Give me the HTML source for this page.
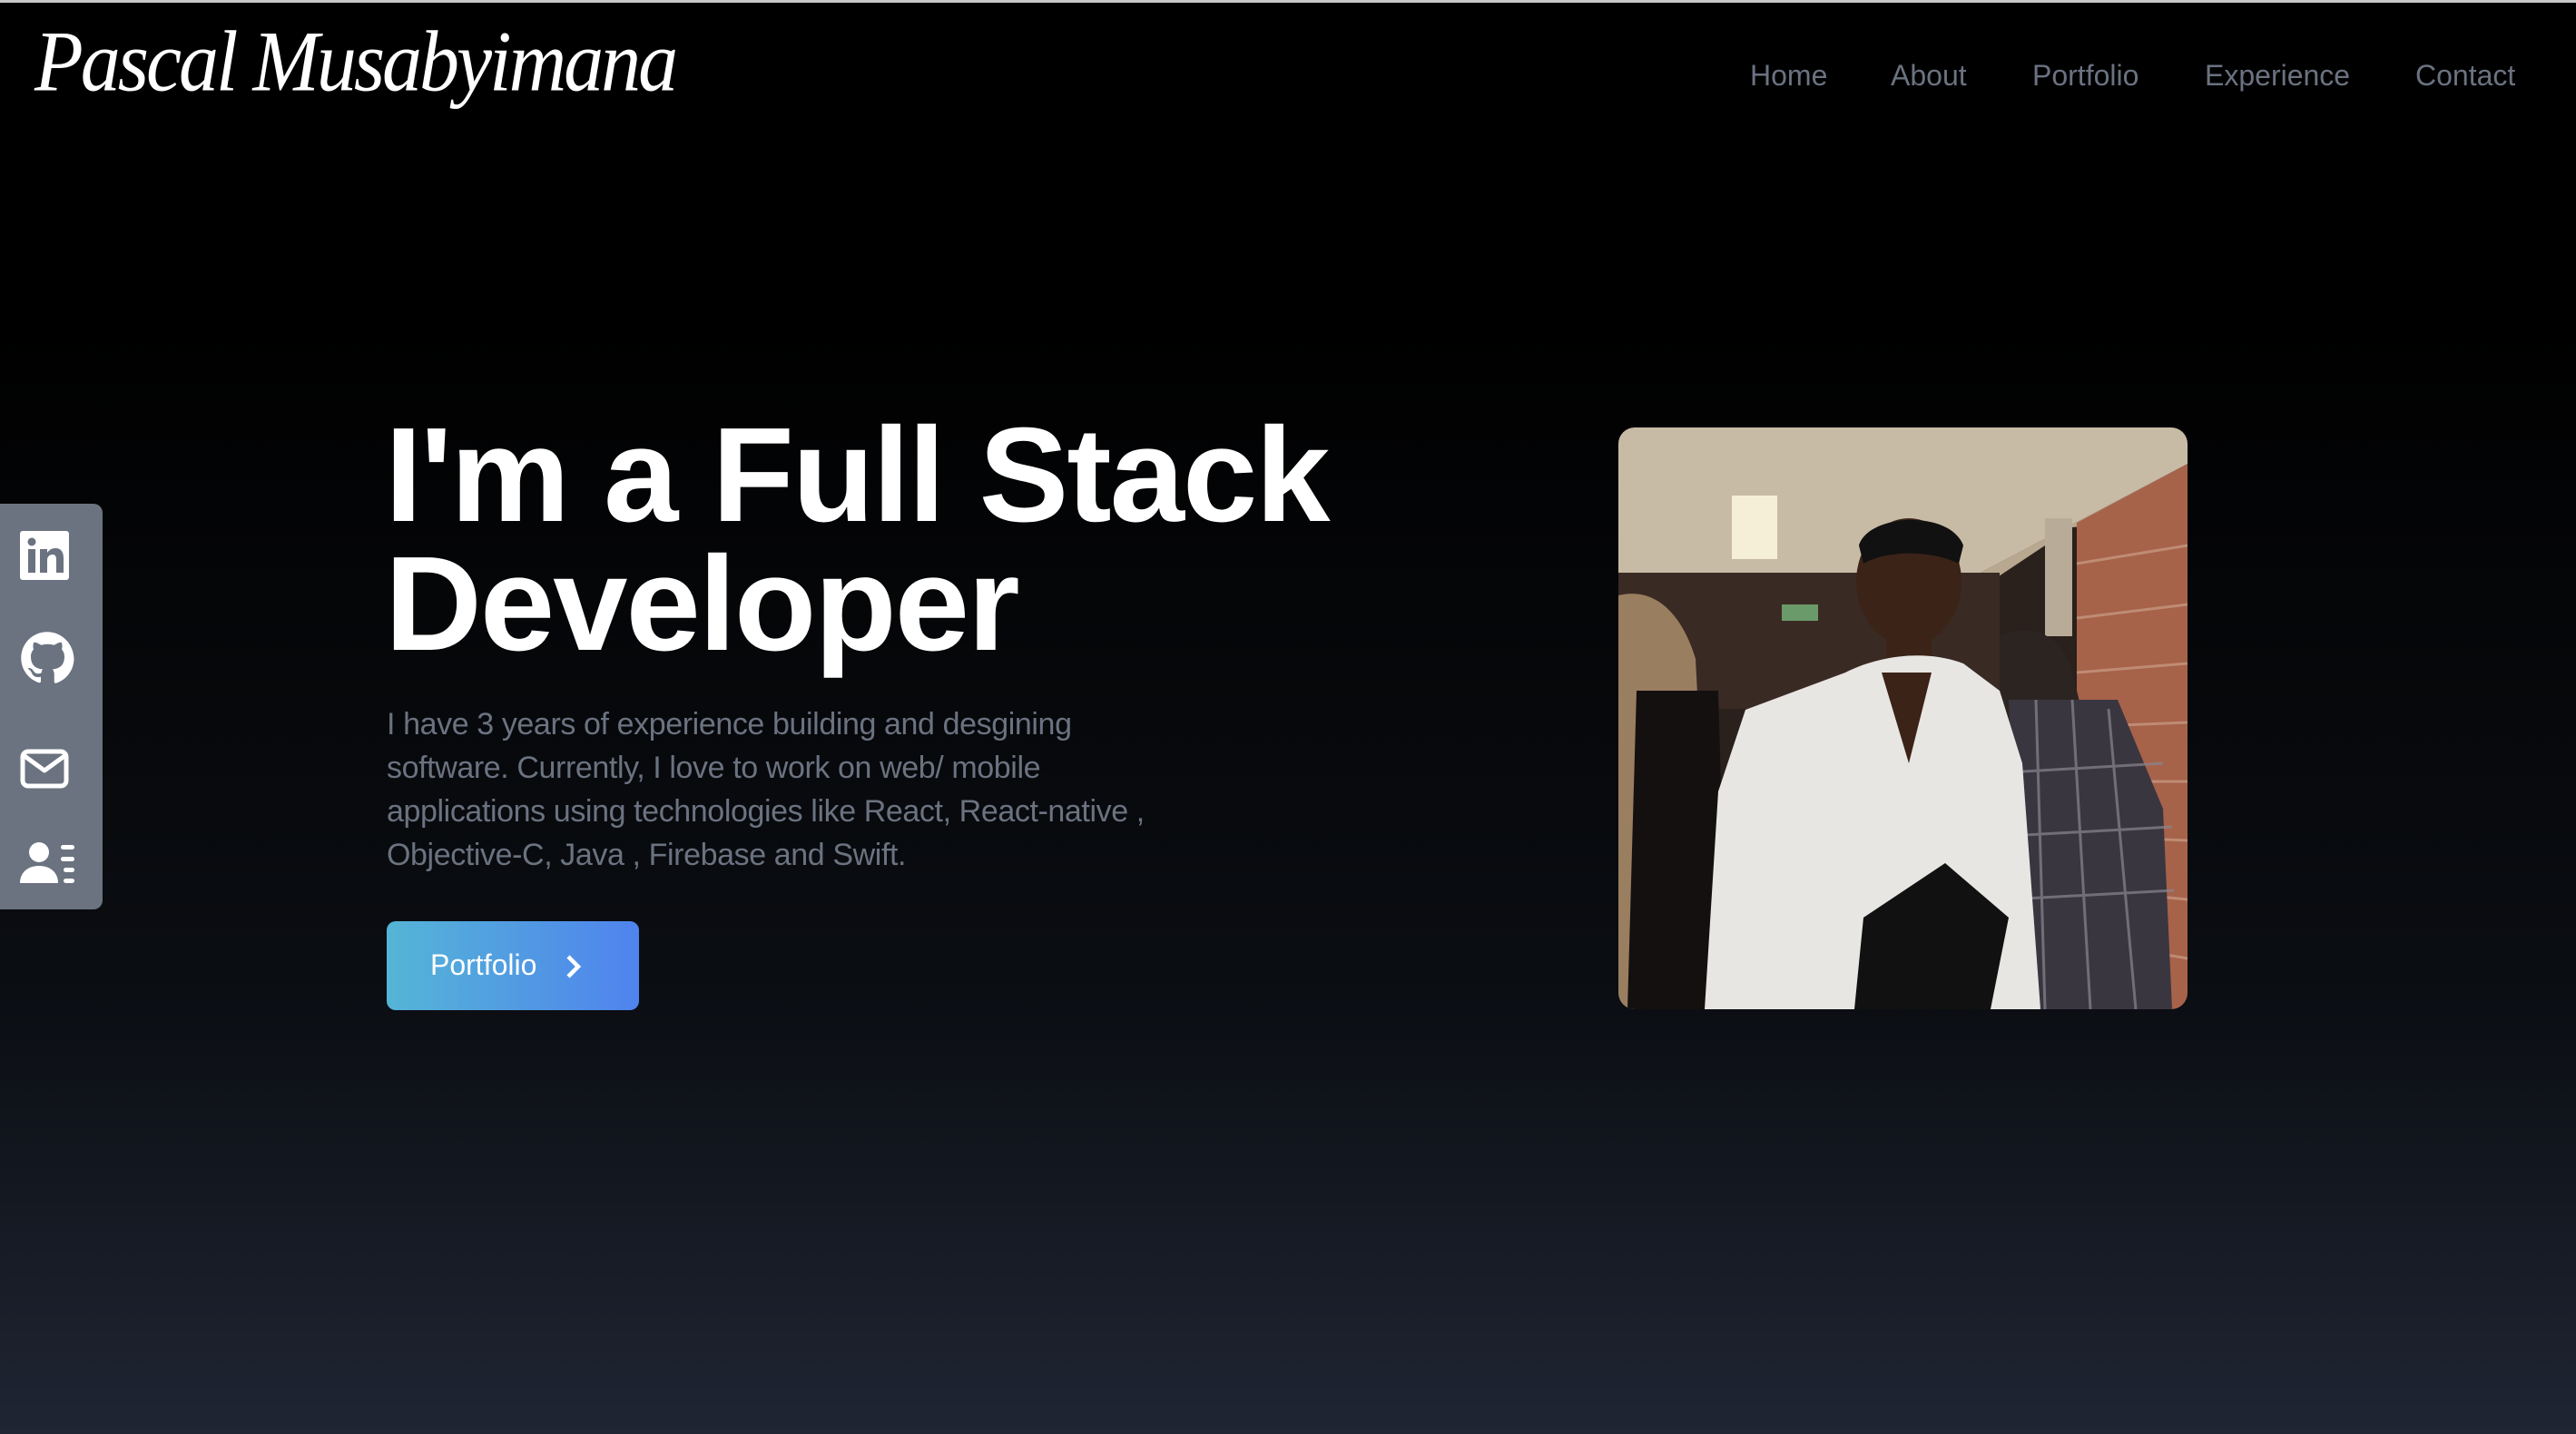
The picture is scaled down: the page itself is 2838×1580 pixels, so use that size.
<!DOCTYPE html>
<html><head><meta charset="utf-8">
<style>
*{margin:0;padding:0;box-sizing:border-box}
html,body{width:2838px;height:1580px;overflow:hidden}
body{background:linear-gradient(180deg,#000 0%,#000 22%,#0b0e13 70%,#1f2533 100%);font-family:"Liberation Sans",sans-serif;position:relative}
.topline{position:absolute;left:0;top:0;width:100%;height:3px;background:#c8c8c8}
.logo{position:absolute;left:38px;top:18px;font-family:"Liberation Serif",serif;font-style:italic;font-size:88px;color:#fff;letter-spacing:-3px;white-space:nowrap;transform:scaleY(1.08)}
.nav{position:absolute;top:65px;font-size:32px;color:#6b7280}
h1{position:absolute;left:424px;top:453px;font-size:148px;line-height:142px;color:#fff;font-weight:bold;letter-spacing:-2px}
p.d{position:absolute;left:426px;top:774px;font-size:34px;line-height:48px;color:#6b7280;letter-spacing:-0.4px;white-space:nowrap}
.btn{position:absolute;left:426px;top:1015px;width:278px;height:98px;border-radius:10px;background:linear-gradient(90deg,#54b5d6,#4f83ee);color:#fff;font-size:32px}
.btn span{position:absolute;left:48px;top:30px}
.btn svg{position:absolute;left:196px;top:36px}
.side{position:absolute;left:0;top:555px;width:113px;height:447px;background:#6b7280;border-radius:0 10px 10px 0}
.side svg{position:absolute;left:22px}
.photo{position:absolute;left:1783px;top:471px;width:627px;height:641px;border-radius:18px;overflow:hidden}
</style></head><body>
<div class="topline"></div>
<div class="logo">Pascal Musabyimana</div>
<div class="nav" style="left:1928px">Home</div>
<div class="nav" style="left:2083px">About</div>
<div class="nav" style="left:2239px">Portfolio</div>
<div class="nav" style="left:2429px">Experience</div>
<div class="nav" style="left:2661px">Contact</div>

<div class="side">
<svg style="top:30px" width="54" height="54" viewBox="0 0 54 54"><rect width="54" height="54" rx="3" fill="#fff"/><rect x="9" y="20" width="8" height="26" fill="#6b7280"/><circle cx="13" cy="12" r="4.5" fill="#6b7280"/><path d="M22 20h8v4c2-3 5-5 9-5 6 0 9 4 9 11v16h-8V32c0-4-1-6-4-6s-6 2-6 6v14h-8z" fill="#6b7280"/></svg>
<svg style="top:140px" width="60" height="60" viewBox="0 0 24 24"><path fill="#fff" d="M12 .5C5.6.5.5 5.6.5 12c0 5.1 3.3 9.4 7.9 10.9.6.1.8-.3.8-.6v-2c-3.2.7-3.9-1.5-3.9-1.5-.5-1.3-1.3-1.7-1.3-1.7-1-.7.1-.7.1-.7 1.2.1 1.8 1.2 1.8 1.2 1 1.8 2.8 1.3 3.5 1 .1-.8.4-1.3.7-1.6-2.6-.3-5.3-1.3-5.3-5.7 0-1.3.5-2.3 1.2-3.1-.1-.3-.5-1.5.1-3.1 0 0 1-.3 3.2 1.2a11 11 0 0 1 5.8 0c2.2-1.5 3.2-1.2 3.2-1.2.6 1.6.2 2.8.1 3.1.7.8 1.2 1.8 1.2 3.1 0 4.4-2.7 5.4-5.3 5.7.4.4.8 1.1.8 2.2v3.3c0 .3.2.7.8.6 4.6-1.5 7.9-5.8 7.9-10.9C23.5 5.6 18.4.5 12 .5z"/></svg>
<svg style="top:270px" width="54" height="44" viewBox="0 0 54 44"><rect x="3" y="3" width="48" height="38" rx="6" fill="none" stroke="#fff" stroke-width="5"/><path d="M5 8l22 16L49 8" fill="none" stroke="#fff" stroke-width="5" stroke-linejoin="round"/></svg>
<svg style="top:372px" width="62" height="48" viewBox="0 0 62 48"><circle cx="21" cy="12" r="11" fill="#fff"/><path d="M0 46c0-12 9-19 21-19s21 7 21 19z" fill="#fff"/><rect x="45" y="4" width="15" height="5" rx="2.5" fill="#fff"/><rect x="45" y="17" width="15" height="5" rx="2.5" fill="#fff"/><rect x="48" y="29" width="12" height="5" rx="2.5" fill="#fff"/><rect x="48" y="41" width="12" height="5" rx="2.5" fill="#fff"/></svg>
</div>

<h1>I'm a Full Stack<br>Developer</h1>
<p class="d">I have 3 years of experience building and desgining<br>software. Currently, I love to work on web/ mobile<br>applications using technologies like React, React-native ,<br>Objective-C, Java , Firebase and Swift.</p>
<div class="btn"><span>Portfolio</span><svg width="20" height="28" viewBox="0 0 20 28"><path d="M4 3l11 11L4 25" fill="none" stroke="#fff" stroke-width="4.5"/></svg></div>

<div class="photo">
<svg width="627" height="641" viewBox="0 0 627 641">
<rect width="627" height="641" fill="#2a211c"/>
<polygon points="0,0 627,0 627,40 380,170 0,165" fill="#c8bba6"/>
<polygon points="380,170 627,40 627,100 500,110 380,190" fill="#b8a88f"/>
<rect x="125" y="75" width="50" height="70" fill="#f5efd8"/>
<rect x="0" y="160" width="420" height="150" fill="#3a2a24"/>
<rect x="180" y="195" width="40" height="18" fill="#6b9a6a"/>
<rect x="470" y="100" width="30" height="130" fill="#b8ab97"/>
<polygon points="505,105 627,40 627,641 560,641 505,560" fill="#a7624a"/>
<g stroke="#cfa790" stroke-width="3" opacity=".6"><line x1="505" y1="150" x2="627" y2="130"/><line x1="505" y1="210" x2="627" y2="195"/><line x1="505" y1="270" x2="627" y2="260"/><line x1="505" y1="330" x2="627" y2="325"/><line x1="505" y1="390" x2="627" y2="390"/><line x1="505" y1="450" x2="627" y2="455"/><line x1="520" y1="510" x2="627" y2="520"/><line x1="540" y1="570" x2="627" y2="585"/></g>
<path d="M0 185c40-10 70 20 85 70l20 386H0z" fill="#9a7e60"/>
<path d="M20 290h90l10 351H10z" fill="#141010"/>
<path d="M420 230c30-15 70-5 80 40l30 120 60 30 15 221H420z" fill="#2c2420"/>
<path d="M430 300h120l50 120 10 221H440z" fill="#3a3640"/>
<g stroke="#8a8690" stroke-width="3" opacity=".7"><line x1="460" y1="300" x2="470" y2="641"/><line x1="500" y1="300" x2="520" y2="641"/><line x1="540" y1="310" x2="570" y2="641"/><line x1="430" y1="380" x2="600" y2="370"/><line x1="430" y1="450" x2="610" y2="440"/><line x1="430" y1="520" x2="612" y2="510"/></g>
<ellipse cx="320" cy="170" rx="58" ry="70" fill="#3b2318"/>
<path d="M265 130c10-35 100-40 115 0l-5 20c-30-15-80-15-105 0z" fill="#111"/>
<rect x="295" y="220" width="50" height="50" fill="#3b2318"/>
<path d="M250 270c40-20 90-25 130-10l40 30 25 80 20 271H95l15-240 30-90z" fill="#e8e6e3"/>
<path d="M290 270l30 100 25-100z" fill="#3b2318"/>
<path d="M270 540l90-60 70 60-20 101H260z" fill="#111"/>
</svg>
</div>
</body></html>
